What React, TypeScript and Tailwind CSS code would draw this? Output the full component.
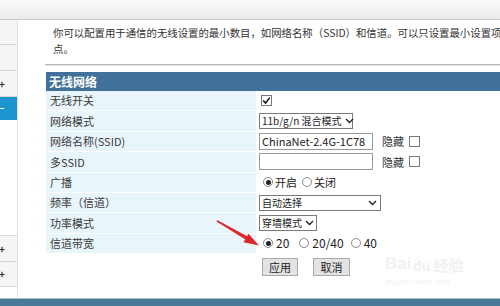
import React from "react";

const font = { fontFamily: '"Noto Sans CJK SC", "Noto Sans", sans-serif' };

function Chevron() {
  return (
    <svg width="9" height="6" viewBox="0 0 9 6" className="shrink-0">
      <path d="M1 1 L4.5 4.5 L8 1" fill="none" stroke="#222" strokeWidth="1.4" />
    </svg>
  );
}

function Select({ text, w }: { text: string; w: string }) {
  return (
    <div className={`${w} h-[16px] border border-[#7a7a7a] bg-white flex items-center justify-between gap-[3px] pl-[2px] pr-[3px] text-[10px] leading-[14px] text-[#222] whitespace-nowrap`}>
      <span>{text}</span>
      <Chevron />
    </div>
  );
}

function Check({ checked }: { checked?: boolean }) {
  return (
    <div className="w-[11px] h-[11px] border border-[#777] bg-white flex items-center justify-center">
      {checked && (
        <svg width="9" height="9" viewBox="0 0 9 9">
          <path d="M1.2 4.6 L3.6 7 L7.8 1.6" fill="none" stroke="#111" strokeWidth="1.5" />
        </svg>
      )}
    </div>
  );
}

function Radio({ on }: { on?: boolean }) {
  return (
    <div className="w-[10px] h-[10px] rounded-full border border-[#8a8a8a] bg-white flex items-center justify-center">
      {on && <div className="w-[5px] h-[5px] rounded-full bg-[#222]" />}
    </div>
  );
}

function Row({ label, children }: { label: string; children?: React.ReactNode }) {
  return (
    <div className="flex h-[20.4px] border-b border-white">
      <div className="w-[209px] bg-[#e8f5fb] pl-[4px] flex items-center text-[11px] text-[#3a3a3a]">{label}</div>
      <div className="flex-1 bg-white border-l border-[#e8f5fb] pl-[3px] flex items-center text-[11px] text-[#222]">
        {children}
      </div>
    </div>
  );
}

function SideItem({ h, plus, border = true }: { h: string; plus?: boolean; border?: boolean }) {
  return (
    <div className={`${h} bg-[#f5f5f5] ${border ? "border-b border-[#d8d8d8]" : ""} flex items-center text-[10px] font-bold text-[#333] leading-none`}>
      {plus && <span className="ml-[-1px]">+</span>}
    </div>
  );
}

export default function App() {
  return (
    <div className="w-[500px] h-[306px] overflow-hidden bg-white relative flex flex-col" style={font}>
      {/* top bar */}
      <div className="h-[20px] shrink-0 bg-gradient-to-b from-[#fafafa] to-[#ebebeb] border-b border-[#c8c8c8]" />

      {/* middle */}
      <div className="flex flex-1 min-h-0">
        {/* sidebar */}
        <div className="w-[18px] shrink-0 border-r border-[#e2e2e2] flex flex-col">
          <SideItem h="h-[25px]" />
          <SideItem h="h-[26px]" />
          <SideItem h="h-[26px]" plus />
          <div className="h-[23px] bg-[#1d96d0] flex items-center">
            <span className="block w-[4px] h-[1.5px] bg-white" />
          </div>
          <div className="h-[116px] bg-white border-b border-[#d8d8d8]" />
          <SideItem h="h-[26px]" plus />
          <SideItem h="h-[25px]" plus />
        </div>

        {/* content */}
        <div className="flex-1 min-w-0 flex flex-col">
          <div className="pl-[35px] pt-[5px] text-[10.4px] leading-[16px] text-[#333] whitespace-nowrap">
            <div>你可以配置用于通信的无线设置的最小数目，如网络名称（SSID）和信道。可以只设置最小设置项</div>
            <div>点。</div>
          </div>
          <div className="ml-[27px] mt-[7px] h-[1px] bg-[#b8b8b8] shadow-[0_1px_0_#e6e6e6]" />
          <div className="ml-[28px] mt-[7px] flex flex-col">
            <div className="h-[19px] bg-[#41719a] flex items-center pl-[3px] text-[12px] font-bold text-white">无线网络</div>
            <Row label="无线开关">
              <div className="ml-[2px]"><Check checked /></div>
            </Row>
            <Row label="网络模式">
              <Select text="11b/g/n 混合模式" w="w-[94px]" />
            </Row>
            <Row label="网络名称(SSID)">
              <div className="w-[114px] h-[17px] border border-[#9a9a9a] bg-white flex items-center pl-[2px] text-[11px] leading-[15px] whitespace-nowrap">ChinaNet-2.4G-1C78</div>
              <span className="ml-[9px] text-[11px] text-[#333]">隐藏</span>
              <div className="ml-[5px]"><Check /></div>
            </Row>
            <Row label="多SSID">
              <div className="w-[114px] h-[17px] border border-[#9a9a9a] bg-white" />
              <span className="ml-[9px] text-[11px] text-[#333]">隐藏</span>
              <div className="ml-[5px]"><Check /></div>
            </Row>
            <Row label="广播">
              <div className="ml-[4px] flex items-center">
                <Radio on />
                <span className="ml-[2px]">开启</span>
                <div className="ml-[5px]"><Radio /></div>
                <span className="ml-[2px]">关闭</span>
              </div>
            </Row>
            <Row label="频率（信道）">
              <Select text="自动选择" w="w-[122px]" />
            </Row>
            <Row label="功率模式">
              <Select text="穿墙模式" w="w-[58px]" />
            </Row>
            <Row label="信道带宽">
              <div className="ml-[4px] flex items-center text-[12px]">
                <Radio on />
                <span className="ml-[3px]">20</span>
                <div className="ml-[10px]"><Radio /></div>
                <span className="ml-[3px]">20/40</span>
                <div className="ml-[7px]"><Radio /></div>
                <span className="ml-[3px]">40</span>
              </div>
            </Row>
            <div className="flex h-[22px] items-end">
              <div className="w-[216px]" />
              <button className="w-[36px] h-[18px] bg-[#e3e3e3] border border-[#a9a9a9] text-[11px] text-[#222] leading-none">应用</button>
              <button className="ml-[15px] w-[37px] h-[18px] bg-[#e3e3e3] border border-[#a9a9a9] text-[11px] text-[#222] leading-none">取消</button>
            </div>
          </div>
        </div>
      </div>

      {/* bottom bar */}
      <div className="h-[8px] shrink-0 bg-[#4b7998] border-t border-[#a9c0d0]" />

      {/* watermark */}
      <div className="absolute left-[385px] top-[255px] pointer-events-none select-none">
        <div className="flex items-end">
          <span className="text-[17px] font-bold leading-none text-[#f1f1f1]" style={{ fontFamily: '"Liberation Sans", sans-serif' }}>Bai</span>
          <span className="text-[14px] font-bold leading-none text-[#f1f1f1] ml-[1px]">du</span>
          <span className="ml-[3px] text-[15px] font-bold leading-none text-[#f1f1f1]">经验</span>
        </div>
        <div className="mt-[6px] text-[8px] leading-none text-[#f2f2f2]" style={{ fontFamily: '"Liberation Sans", sans-serif' }}>jingyan.baidu.com</div>
      </div>

      {/* red arrow */}
      <svg className="absolute left-0 top-0 pointer-events-none" width="500" height="306">
        <polygon points="216.5,221.5 217.5,220.2 249,237.2 247,240.6" fill="#e0262a" />
        <polygon points="259,245.5 243.5,242.3 248.5,233.8" fill="#e0262a" />
      </svg>
    </div>
  );
}
